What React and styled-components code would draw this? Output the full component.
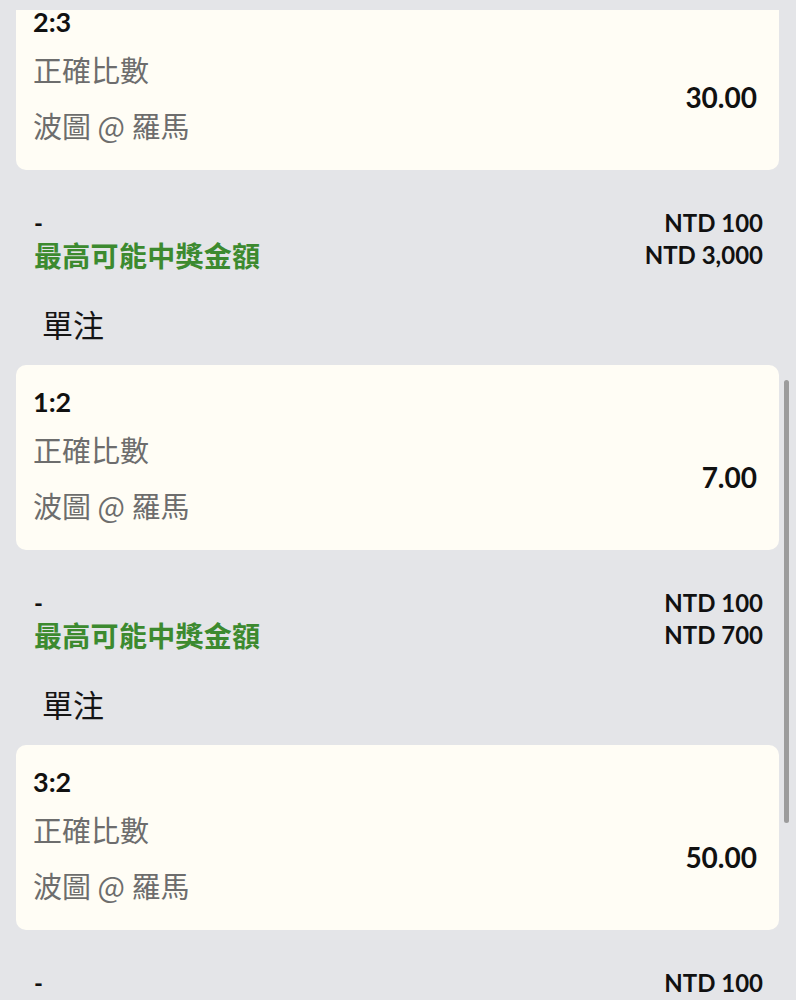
import React, { useLayoutEffect, useRef } from "react";
import styled, { createGlobalStyle } from "styled-components";

const GlobalStyle = createGlobalStyle`
  html, body {
    margin: 0;
    padding: 0;
    background: #e4e5e8;
  }
  body {
    font-family: "Lato", "Noto Sans CJK TC", sans-serif;
    color: #111;
  }
  * { box-sizing: border-box; }
`;

const Page = styled.div`
  position: relative;
  height: 1000px;
  padding-top: 10px;
  background: #e4e5e8;
  overflow: hidden;
`;

const Scroller = styled.div`
  position: relative;
  height: 990px;
  overflow-y: auto;
  scrollbar-width: none;
  &::-webkit-scrollbar { display: none; }
`;

const List = styled.div`
  display: flex;
  flex-direction: column;
  padding: 20px 17px 40px 16px;
`;

const Group = styled.section`
  display: flex;
  flex-direction: column;
`;

const BetType = styled.div`
  padding-left: 26px;
  font-family: "Noto Sans CJK TC", sans-serif;
  font-size: 31px;
  line-height: 40px;
  color: #151515;
  margin-bottom: 21px;
`;

const Card = styled.article`
  background: #fffdf5;
  border-radius: 10px;
  padding: 21px 22px 25px 17px;
  display: flex;
  flex-direction: column;
`;

const Selection = styled.div`
  font-family: "Lato", sans-serif;
  font-weight: 700;
  font-size: 27px;
  line-height: 32px;
  color: #111;
  margin-bottom: 11px;
`;

const CardBody = styled.div`
  display: flex;
  align-items: center;
  justify-content: space-between;
`;

const Details = styled.div`
  display: flex;
  flex-direction: column;
  gap: 16px;
`;

const Detail = styled.div`
  font-family: "Noto Sans CJK TC", sans-serif;
  font-size: 29px;
  line-height: 40px;
  color: #6d6d6d;
`;

const Odds = styled.div`
  font-family: "Lato", sans-serif;
  font-weight: 700;
  font-size: 28px;
  color: #111;
`;

const Summary = styled.div`
  display: flex;
  justify-content: space-between;
  padding: 37px 16px 0 18px;
  margin-bottom: 33px;
`;

const SummaryCol = styled.div`
  display: flex;
  flex-direction: column;
  align-items: ${(p) => (p.$right ? "flex-end" : "flex-start")};
`;

const Dash = styled.div`
  font-family: "Lato", sans-serif;
  font-weight: 700;
  font-size: 24px;
  line-height: 32px;
  color: #111;
`;

const PayoutLabel = styled.div`
  font-family: "Noto Sans CJK TC", sans-serif;
  font-weight: 700;
  font-size: 28px;
  line-height: 32px;
  letter-spacing: 0.3px;
  color: #3c8a2f;
`;

const Amount = styled.div`
  font-family: "Lato", sans-serif;
  font-weight: 700;
  font-size: 24px;
  line-height: 32px;
  color: #111;
`;

const Thumb = styled.div`
  position: absolute;
  right: 7px;
  top: 380px;
  width: 5px;
  height: 443px;
  border-radius: 3px;
  background: #9c9c9c;
`;

const bets = [
  { score: "2:3", odds: "30.00", stake: "NTD 100", payout: "NTD 3,000" },
  { score: "1:2", odds: "7.00", stake: "NTD 100", payout: "NTD 700" },
  { score: "3:2", odds: "50.00", stake: "NTD 100", payout: "NTD 5,000" },
  { score: "0:1", odds: "9.00", stake: "NTD 100", payout: "NTD 900" },
];

export default function App() {
  const scrollRef = useRef(null);
  const firstCardRef = useRef(null);

  useLayoutEffect(() => {
    if (scrollRef.current && firstCardRef.current) {
      scrollRef.current.scrollTop = firstCardRef.current.offsetTop + 25;
    }
  }, []);

  return (
    <>
      <GlobalStyle />
      <Page>
        <Scroller ref={scrollRef}>
          <List>
            {bets.map((b, i) => (
              <Group key={b.score}>
                <BetType>單注</BetType>
                <Card ref={i === 0 ? firstCardRef : undefined}>
                  <Selection>{b.score}</Selection>
                  <CardBody>
                    <Details>
                      <Detail>正確比數</Detail>
                      <Detail>波圖 @ 羅馬</Detail>
                    </Details>
                    <Odds>{b.odds}</Odds>
                  </CardBody>
                </Card>
                <Summary>
                  <SummaryCol>
                    <Dash>-</Dash>
                    <PayoutLabel>最高可能中獎金額</PayoutLabel>
                  </SummaryCol>
                  <SummaryCol $right>
                    <Amount>{b.stake}</Amount>
                    <Amount>{b.payout}</Amount>
                  </SummaryCol>
                </Summary>
              </Group>
            ))}
          </List>
        </Scroller>
        <Thumb />
      </Page>
    </>
  );
}
